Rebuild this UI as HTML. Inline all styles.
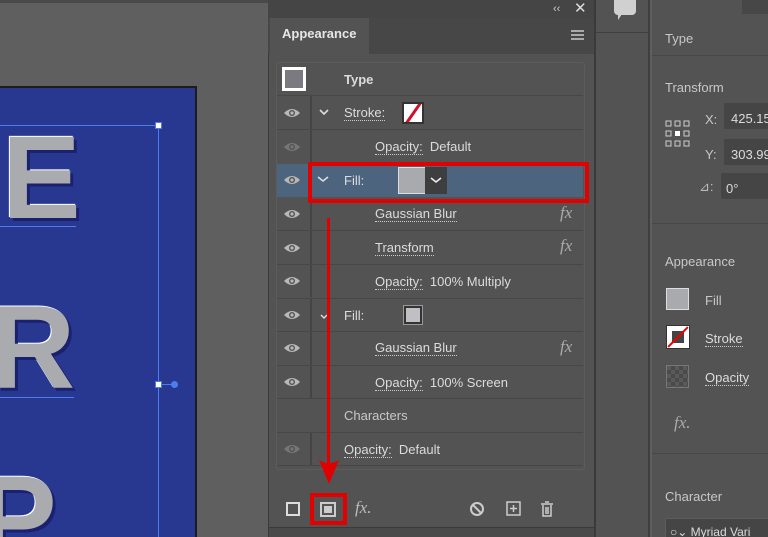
<!DOCTYPE html>
<html><head><meta charset="utf-8"><style>
*{margin:0;padding:0;box-sizing:border-box}
html,body{width:768px;height:537px;overflow:hidden}
body{background:#5f5f5f;font-family:"Liberation Sans",sans-serif;color:#d6d6d6}
#w{position:relative;width:768px;height:537px;overflow:hidden}
.a{position:absolute}
.t{position:absolute;font-size:13px;color:#dcdcdc;white-space:nowrap;line-height:15px}
.u{border-bottom:1px dotted #ccc;line-height:14px}
.sep{position:absolute;left:277px;width:306px;height:1px;background:#474747}
.L{position:absolute;font:bold 118px "Liberation Sans",sans-serif;color:#a9abae;text-shadow:3px 3px 0 #1a2270,-1px -1px 0 #fff}
.fx{position:absolute;left:560px;font:italic 17px "Liberation Serif",serif;color:#aaa}
</style></head><body><div id="w">
<!-- canvas -->
<div class="a" style="left:0;top:0;width:268px;height:3px;background:#4a4a4a"></div>
<div class="a" style="left:0;top:86px;width:197px;height:451px;background:#1c1c1c"></div>
<div class="a" style="left:0;top:88px;width:195px;height:449px;background:#283891;overflow:hidden">
<div class="L" style="left:2px;top:22px">E</div>
<div class="L" style="left:-10px;top:192px">R</div>
<div class="L" style="left:-22px;top:362px">P</div>
</div>
<div class="a" style="left:0;top:125px;width:158px;height:1px;background:#4b7cf0"></div>
<div class="a" style="left:158px;top:125px;width:1px;height:412px;background:#4b7cf0"></div>
<div class="a" style="left:0;top:226px;width:76px;height:1px;background:#4b7cf0"></div>
<div class="a" style="left:0;top:397px;width:74px;height:1px;background:#4b7cf0"></div>
<div class="a" style="left:155px;top:122px;width:7px;height:7px;background:#fff;border:1px solid #4b7cf0"></div>
<div class="a" style="left:155px;top:381px;width:7px;height:7px;background:#fff;border:1px solid #4b7cf0"></div>
<div class="a" style="left:162px;top:384px;width:10px;height:1px;background:#4b7cf0"></div>
<div class="a" style="left:171px;top:381px;width:7px;height:7px;border-radius:50%;background:#4b7cf0"></div>

<!-- appearance panel -->
<div class="a" style="left:268px;top:0;width:328px;height:537px;background:#535353;border-left:1px solid #3a3a3a;border-right:2px solid #3a3a3a"></div>
<div class="a" style="left:268px;top:0;width:326px;height:18px;background:#454545"></div>
<div class="t" style="left:553px;top:2px;font-size:11px;color:#ccc">‹‹</div>
<div class="t" style="left:574px;top:1px;font-size:15px;color:#ddd">✕</div>
<div class="a" style="left:268px;top:18px;width:326px;height:36px;background:#474747"></div>
<div class="a" style="left:270px;top:18px;width:99px;height:36px;background:#535353"></div>
<div class="t" style="left:282px;top:26px;font-weight:bold;color:#e6e6e6">Appearance</div>
<div class="a" style="left:571px;top:30px;width:13px;height:2px;background:#aaa;box-shadow:0 4px 0 #aaa,0 8px 0 #aaa"></div>
<div class="a" style="left:276px;top:62px;width:309px;height:408px;border:1px solid #5c5c5c;border-radius:3px"></div>

<div class="a" style="left:282px;top:67px;width:24px;height:24px;background:#fff;padding:3px"><div style="width:100%;height:100%;background:#7a7a80"></div></div>
<div class="t" style="left:344px;top:72px;font-weight:bold">Type</div>
<div class="sep" style="top:95px"></div>

<div class="a" style="left:310px;top:96px;width:2px;height:100px;background:#444"></div>
<div class="a" style="left:310px;top:197px;width:2px;height:100px;background:#444"></div>
<div class="a" style="left:310px;top:298px;width:2px;height:100px;background:#444"></div>
<div class="a" style="left:310px;top:433px;width:2px;height:33px;background:#444"></div>

<div class="a" style="left:277px;top:164px;width:306px;height:33px;background:#4d647e"></div>

<svg class="a" style="left:0;top:0" width="768" height="537">
<defs><g id="e"><path d="M-8 0Q0 -8 8 0Q0 8 -8 0Z" fill="#b8b8b8"/><circle r="3" fill="#535353"/><circle r="1.6" fill="#b8b8b8"/></g></defs>
<use href="#e" x="292" y="113"/><use href="#e" x="292" y="147" opacity=".35"/><use href="#e" x="292" y="180"/><use href="#e" x="292" y="214"/><use href="#e" x="292" y="248"/><use href="#e" x="292" y="281"/><use href="#e" x="292" y="315"/><use href="#e" x="292" y="348"/><use href="#e" x="292" y="382"/><use href="#e" x="292" y="449" opacity=".35"/>
<path d="M320 110l4 4 4-4" stroke="#ddd" stroke-width="1.6" fill="none"/>
<path d="M321 315l3 3 3-3" stroke="#ddd" stroke-width="1.4" fill="none"/>
</svg>
<div class="t u" style="left:344px;top:106px">Stroke:</div>
<div class="a" style="left:402px;top:102px;width:22px;height:22px;background:#fff;border:2px solid #333;overflow:hidden"><div style="position:absolute;left:8px;top:-3px;width:3px;height:24px;background:#d0102a;transform:rotate(35deg)"></div></div>
<div class="sep" style="top:129px"></div>
<div class="t" style="left:375px;top:139px"><span class="u">Opacity:</span>&nbsp; Default</div>

<div class="a" style="left:308px;top:162px;width:281px;height:41px;border:4px solid #e20000"></div>
<svg class="a" style="left:316px;top:174px" width="14" height="10"><path d="M2 3l5 4 5-4" stroke="#ddd" stroke-width="1.6" fill="none"/></svg>
<div class="t" style="left:344px;top:173px">Fill:</div>
<div class="a" style="left:398px;top:167px;width:28px;height:27px;background:#a9aaae;border:1px solid #ddd"></div>
<div class="a" style="left:425px;top:167px;width:22px;height:27px;background:#3e3e3e"></div>
<svg class="a" style="left:429px;top:174px" width="14" height="12"><path d="M2 4l5 4 5-4" stroke="#eee" stroke-width="1.6" fill="none"/></svg>

<div class="t u" style="left:375px;top:207px">Gaussian Blur</div><div class="fx" style="top:203px">fx</div>
<div class="sep" style="top:230px"></div>
<div class="t u" style="left:375px;top:241px">Transform</div><div class="fx" style="top:236px">fx</div>
<div class="sep" style="top:264px"></div>
<div class="t" style="left:375px;top:274px"><span class="u">Opacity:</span>&nbsp; 100% Multiply</div>
<div class="sep" style="top:298px"></div>
<div class="t" style="left:344px;top:308px">Fill:</div>
<div class="a" style="left:404px;top:306px;width:18px;height:18px;background:#c0c0c4;border:2px solid #333;outline:1px solid #999"></div>
<div class="sep" style="top:331px"></div>
<div class="t u" style="left:375px;top:341px">Gaussian Blur</div><div class="fx" style="top:337px">fx</div>
<div class="sep" style="top:365px"></div>
<div class="t" style="left:375px;top:375px"><span class="u">Opacity:</span>&nbsp; 100% Screen</div>
<div class="sep" style="top:398px"></div>
<div class="t" style="left:344px;top:408px;color:#c8c8c8">Characters</div>
<div class="sep" style="top:432px"></div>
<div class="t" style="left:344px;top:442px"><span class="u">Opacity:</span>&nbsp; Default</div>
<div class="sep" style="top:465px"></div>

<!-- arrow -->
<div class="a" style="left:327px;top:218px;width:3px;height:245px;background:#e00000"></div>
<svg class="a" style="left:316px;top:458px" width="26" height="28"><path d="M3 2Q13 8 23 2L13 26Z" fill="#e00000"/></svg>

<!-- toolbar -->
<div class="a" style="left:286px;top:502px;width:14px;height:14px;border:2px solid #ddd"></div>
<div class="a" style="left:310px;top:493px;width:37px;height:32px;border:4px solid #e20000"></div>
<div class="a" style="left:320px;top:502px;width:16px;height:15px;border:2px solid #ccc;padding:2px"><div style="width:100%;height:100%;background:#ccc"></div></div>
<div class="t" style="left:355px;top:498px;font:italic 17px 'Liberation Serif',serif;color:#bbb">fx.</div>
<svg class="a" style="left:468px;top:500px" width="100" height="18">
<circle cx="9" cy="9" r="6" stroke="#ccc" stroke-width="2" fill="none"/><path d="M5 5l8 8" stroke="#ccc" stroke-width="2"/>
<rect x="39" y="2" width="13" height="13" stroke="#ccc" stroke-width="1.5" fill="none"/><path d="M45.5 5v7M42 8.5h7" stroke="#ccc" stroke-width="1.5"/>
<path d="M73 4h12M77 2h4M75 5v11h8V5M78 7v7M80 7v7" stroke="#ccc" stroke-width="1.5" fill="none"/>
</svg>
<div class="a" style="left:269px;top:527px;width:325px;height:10px;background:#4a4a4a;border-top:1px solid #3a3a3a"></div>

<!-- middle strip -->
<div class="a" style="left:596px;top:0;width:54px;height:537px;background:#535353;border-right:2px solid #3f3f3f"></div>
<div class="a" style="left:596px;top:32px;width:54px;height:1px;background:#3f3f3f"></div>
<div class="a" style="left:614px;top:0;width:22px;height:15px;background:#d0d0d0;border-radius:0 0 4px 4px"></div>
<div class="a" style="left:618px;top:14px;width:0;height:0;border-left:4px solid #d0d0d0;border-right:4px solid transparent;border-bottom:6px solid transparent"></div>

<!-- right panel -->
<div class="a" style="left:652px;top:0;width:116px;height:537px;background:#535353"></div>
<div class="a" style="left:742px;top:0;width:26px;height:14px;background:#474747"></div>
<div class="a" style="left:652px;top:55px;width:116px;height:1px;background:#474747"></div>
<div class="a" style="left:652px;top:223px;width:116px;height:1px;background:#474747"></div>
<div class="a" style="left:652px;top:453px;width:116px;height:1px;background:#474747"></div>
<div class="t" style="left:665px;top:31px;color:#c8c8c8">Type</div>
<div class="t" style="left:665px;top:80px;color:#c8c8c8">Transform</div>
<svg class="a" style="left:665px;top:120px" width="26" height="28"><g stroke="#ccc" fill="none" stroke-width="1"><rect x="1" y="1" width="5" height="5"/><rect x="10" y="1" width="5" height="5"/><rect x="19" y="1" width="5" height="5"/><rect x="1" y="11" width="5" height="5"/><rect x="19" y="11" width="5" height="5"/><rect x="1" y="21" width="5" height="5"/><rect x="10" y="21" width="5" height="5"/><rect x="19" y="21" width="5" height="5"/></g><rect x="10" y="11" width="5" height="5" fill="#fff"/></svg>
<div class="t" style="left:705px;top:112px;color:#c8c8c8">X:</div>
<div class="a" style="left:724px;top:103px;width:50px;height:26px;background:#454545;border-radius:2px"></div>
<div class="t" style="left:731px;top:111px">425.15</div>
<div class="t" style="left:705px;top:147px;color:#c8c8c8">Y:</div>
<div class="a" style="left:724px;top:139px;width:50px;height:26px;background:#454545;border-radius:2px"></div>
<div class="t" style="left:731px;top:147px">303.99</div>
<div class="t" style="left:699px;top:179px;color:#bbb">⊿:</div>
<div class="a" style="left:721px;top:173px;width:50px;height:26px;background:#454545;border-radius:2px"></div>
<div class="t" style="left:726px;top:181px">0°</div>
<div class="t" style="left:665px;top:254px;color:#c8c8c8">Appearance</div>
<div class="a" style="left:666px;top:288px;width:23px;height:22px;background:#a9aaae;border:1px solid #ddd"></div>
<div class="t" style="left:705px;top:293px;color:#c8c8c8">Fill</div>
<div class="a" style="left:666px;top:325px;width:24px;height:24px;background:#fff;border:1px solid #333;padding:5px"><div style="width:100%;height:100%;background:#444"></div></div>
<div class="a" style="left:664px;top:336px;width:28px;height:2px;background:#e00;transform:rotate(-45deg)"></div>
<div class="t u" style="left:705px;top:332px">Stroke</div>
<div class="a" style="left:666px;top:365px;width:23px;height:23px;background:#5a5a5a;border:1px solid #777;background-image:linear-gradient(45deg,#4a4a4a 25%,transparent 25%,transparent 75%,#4a4a4a 75%),linear-gradient(45deg,#4a4a4a 25%,transparent 25%,transparent 75%,#4a4a4a 75%);background-size:8px 8px;background-position:0 0,4px 4px"></div>
<div class="t u" style="left:705px;top:371px">Opacity</div>
<div class="t" style="left:674px;top:413px;font:italic 17px 'Liberation Serif',serif;color:#aaa">fx.</div>
<div class="t" style="left:665px;top:489px;color:#c8c8c8">Character</div>
<div class="a" style="left:665px;top:518px;width:110px;height:19px;background:#454545;border:1px solid #5c5c5c;border-bottom:none;border-radius:2px 2px 0 0"></div>
<div class="t" style="left:670px;top:525px;font-size:12px">○⌄ Myriad Vari</div>
</div></body></html>
